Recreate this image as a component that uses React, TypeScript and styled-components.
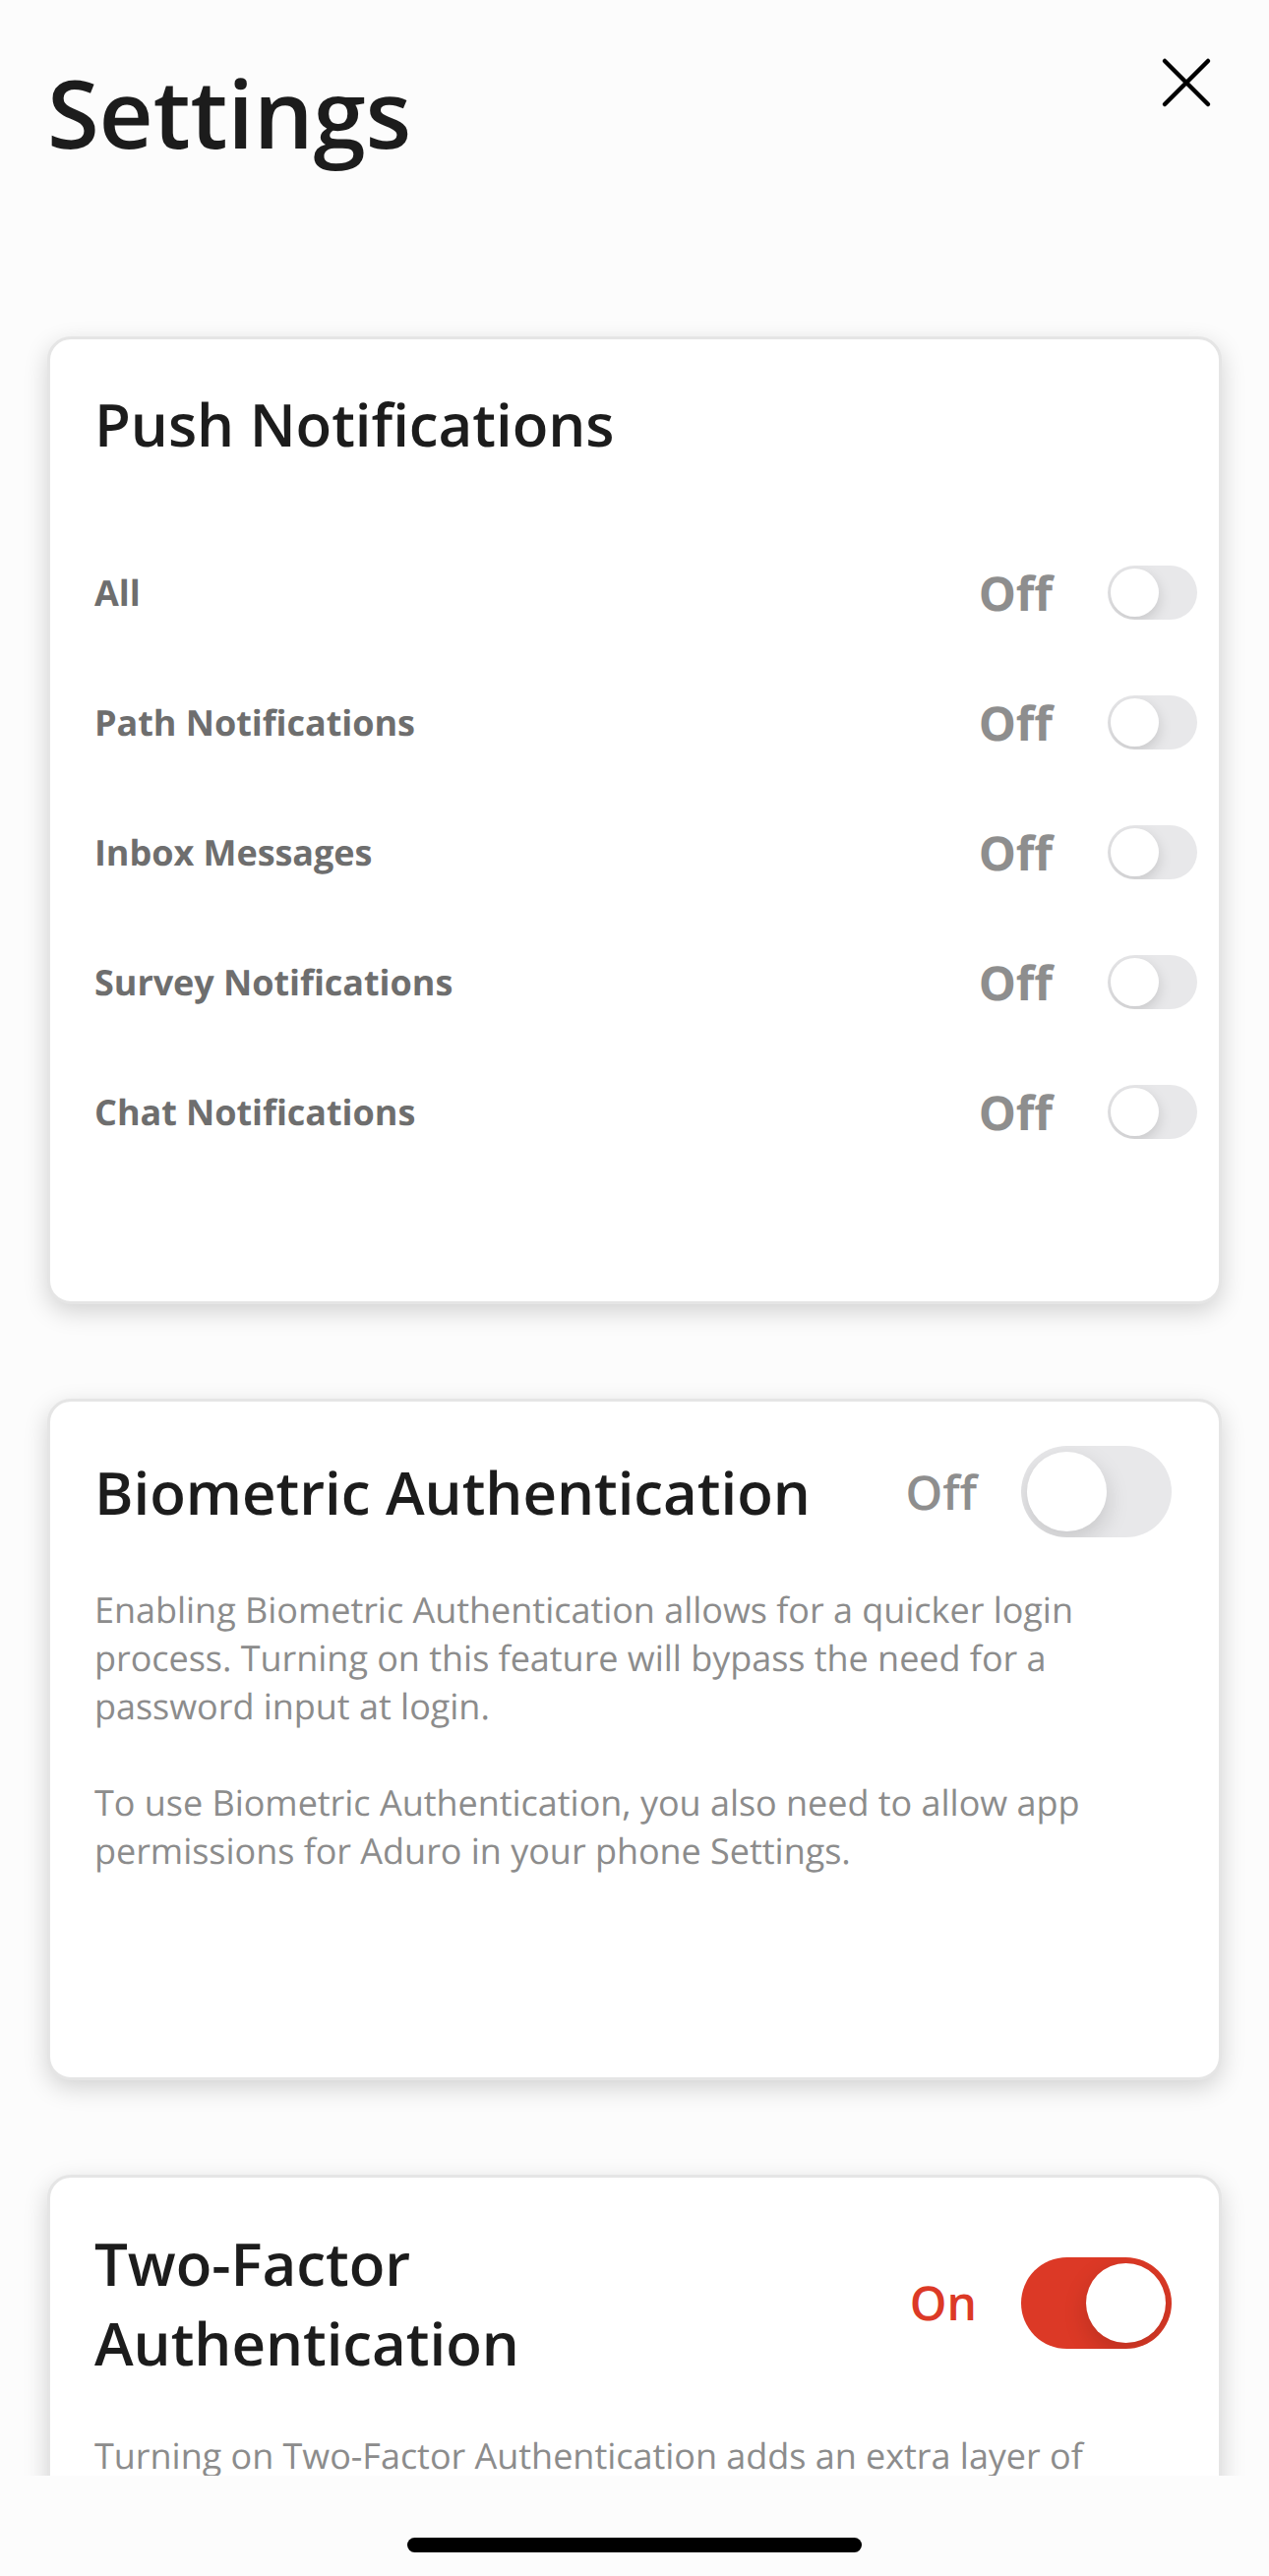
import React from "react";
import styled, { createGlobalStyle } from "styled-components";

const GlobalStyle = createGlobalStyle`
  * {
    box-sizing: border-box;
  }
  body {
    margin: 0;
    background-color: #fcfcfc;
    font-family: "Open Sans", sans-serif;
    color: #1c1c1c;
    text-rendering: geometricPrecision;
  }
`;

const ScreenStyled = styled.div`
  display: flex;
  flex-direction: column;
  width: 1290px;
  height: 2619px;
  overflow: hidden;
`;

const ContentStyled = styled.main`
  flex: none;
  height: 2517px;
  padding: 0 48px;
  overflow: hidden;
`;

const HeaderStyled = styled.header`
  display: flex;
  justify-content: space-between;
  height: 342px;
  & h1 {
    margin: 49px 0 0;
    font-size: 96px;
    line-height: 131px;
    font-weight: 600;
    letter-spacing: -0.2px;
  }
`;

const CloseButtonStyled = styled.button`
  width: 52px;
  height: 52px;
  margin: 58px 10px 0 0;
  padding: 0;
  border: 0;
  background: none;
  & svg {
    display: block;
  }
`;

const CardStyled = styled.section<{ $height: number }>`
  height: ${(p) => p.$height}px;
  margin-bottom: 96px;
  border: 3px solid #e5e5e5;
  border-radius: 24px;
  background-color: white;
  box-shadow: 0 8px 24px rgba(0, 0, 0, 0.17);
`;

const CardHeaderStyled = styled.div<{ $height: number; $gap: number }>`
  display: flex;
  align-items: center;
  justify-content: space-between;
  height: ${(p) => p.$height}px;
  margin-bottom: ${(p) => p.$gap}px;
  padding: 0 48px 0 45px;
`;

const CardTitleStyled = styled.h2`
  margin: 1px 0 0;
  font-size: 60px;
  line-height: 81px;
  font-weight: 600;
  letter-spacing: -0.05px;
`;

const RowsStyled = styled.div`
  padding: 0 22px 0 45px;
`;

const RowStyled = styled.div`
  display: flex;
  align-items: center;
  justify-content: space-between;
  height: 132px;
`;

const RowLabelStyled = styled.span`
  color: #6e6e6e;
  font-size: 36px;
  font-weight: 700;
  letter-spacing: -0.05px;
`;

const SwitchBoxStyled = styled.div<{ $gap: number }>`
  display: flex;
  align-items: center;
  gap: ${(p) => p.$gap}px;
`;

const StateStyled = styled.span<{ $on?: boolean; $bold?: boolean }>`
  padding-top: ${(p) => (p.$on ? 0 : 1)}px;
  color: ${(p) => (p.$on ? "#dc3926" : "#8e8e8e")};
  font-size: 48px;
  line-height: 65px;
  font-weight: ${(p) => (p.$bold ? 700 : 600)};
`;

const TrackStyled = styled.div<{ $on?: boolean; $small?: boolean }>`
  display: flex;
  justify-content: ${(p) => (p.$on ? "flex-end" : "flex-start")};
  width: ${(p) => (p.$small ? 91 : 153)}px;
  height: ${(p) => (p.$small ? 55 : 93)}px;
  padding: ${(p) => (p.$small ? 3 : 6)}px;
  border-radius: 47px;
  background-color: ${(p) => (p.$on ? "#dc3926" : "#e8e8ea")};
  overflow: hidden;
`;

const ThumbStyled = styled.div<{ $small?: boolean }>`
  height: 100%;
  aspect-ratio: 1;
  border-radius: 50%;
  background-color: white;
  box-shadow: ${(p) => (p.$small ? "0 5px 14px" : "0 9px 24px")} rgba(0, 0, 0, 0.15);
`;

const DescriptionStyled = styled.p`
  margin: 0 40px 49px 45px;
  color: #8c8c8c;
  font-size: 36px;
  line-height: 49px;
  letter-spacing: -0.03px;
`;

const HomeBarStyled = styled.div`
  width: 462px;
  height: 15px;
  margin: 63px auto 0;
  border-radius: 8px;
  background-color: black;
`;

type SwitchProps = {
  on?: boolean;
  small?: boolean;
}

const Switch = ({ on, small }: SwitchProps) => (
  <SwitchBoxStyled $gap={small ? 56 : 45}>
    <StateStyled $on={on} $bold={small}>
      {on ? "On" : "Off"}
    </StateStyled>
    <TrackStyled $on={on} $small={small}>
      <ThumbStyled $small={small} />
    </TrackStyled>
  </SwitchBoxStyled>
);

const notifications = [
  "All",
  "Path Notifications",
  "Inbox Messages",
  "Survey Notifications",
  "Chat Notifications",
];

const App = () => {
  return (
    <ScreenStyled>
      <GlobalStyle />
      <ContentStyled>
        <HeaderStyled>
          <h1>Settings</h1>
          <CloseButtonStyled aria-label="Close">
            <svg width="52" height="52" viewBox="0 0 52 52">
              <path d="M4 4L48 48M48 4L4 48" stroke="black" strokeWidth="4.5" strokeLinecap="round" />
            </svg>
          </CloseButtonStyled>
        </HeaderStyled>

        <CardStyled $height={984}>
          <CardHeaderStyled $height={171} $gap={20.5}>
            <CardTitleStyled>Push Notifications</CardTitleStyled>
          </CardHeaderStyled>
          <RowsStyled>
            {notifications.map((label) => (
              <RowStyled key={label}>
                <RowLabelStyled>{label}</RowLabelStyled>
                <Switch small />
              </RowStyled>
            ))}
          </RowsStyled>
        </CardStyled>

        <CardStyled $height={693}>
          <CardHeaderStyled $height={183} $gap={4}>
            <CardTitleStyled>Biometric Authentication</CardTitleStyled>
            <Switch />
          </CardHeaderStyled>
          <DescriptionStyled>
            Enabling Biometric Authentication allows for a quicker login<br />
            process. Turning on this feature will bypass the need for a<br />
            password input at login.
          </DescriptionStyled>
          <DescriptionStyled>
            To use Biometric Authentication, you also need to allow app<br />
            permissions for Aduro in your phone Settings.
          </DescriptionStyled>
        </CardStyled>

        <CardStyled $height={693}>
          <CardHeaderStyled $height={255} $gap={3}>
            <CardTitleStyled>
              Two-Factor<br />
              Authentication
            </CardTitleStyled>
            <Switch on />
          </CardHeaderStyled>
          <DescriptionStyled>
            Turning on Two-Factor Authentication adds an extra layer of
          </DescriptionStyled>
        </CardStyled>
      </ContentStyled>
      <HomeBarStyled />
    </ScreenStyled>
  );
};

export default App;
